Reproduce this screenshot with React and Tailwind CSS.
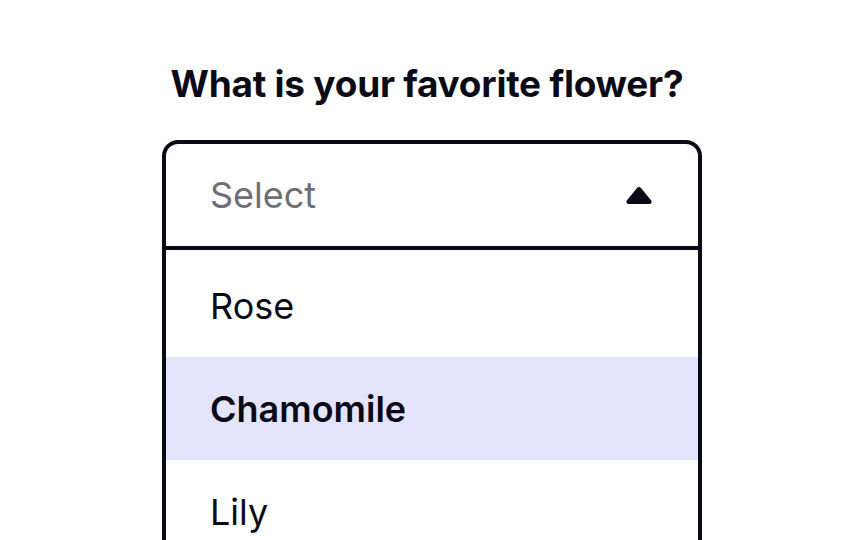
import React, { useState } from 'react';

const flowers = ['Rose', 'Chamomile', 'Lily'];

const App = () => {
  const [active] = useState('Chamomile');

  return (
    <div className="w-[864px] h-[540px] overflow-hidden bg-white font-['Inter',sans-serif] text-[#0b0b18]">
      <div className="flex flex-col items-center pt-[62px]">
        {/* Question */}
        <h1 className="mr-[10px] text-[37px] leading-[44px] font-bold tracking-[-0.25px]">What is your favorite flower?</h1>

        {/* Select box */}
        <div className="mt-[34px] w-[540px] border-4 border-[#0b0b18] rounded-2xl overflow-hidden">
          <div className="h-[106px] flex items-center justify-between pl-[44px] pr-[45px] border-b-4 border-[#0b0b18]">
            <span className="text-[36px] text-[#6e6e76]">Select</span>
            <svg width="28" height="19" viewBox="0 0 28 19">
              <path d="M11.6 2.4 Q14 -0.4 16.4 2.4 L26 14.2 Q27.6 17.6 24.4 18 L3.6 18 Q0.4 17.6 2 14.2 Z" fill="#0b0b18" />
            </svg>
          </div>
          <ul className="pt-1">
            {flowers.map((f) => (
              <li
                key={f}
                className={`h-[103px] flex items-center pl-[44px] text-[36px] ${f === active ? 'bg-[#e4e4fd] font-semibold' : ''}`}
              >
                {f}
              </li>
            ))}
          </ul>
        </div>
      </div>
    </div>
  );
};

export default App;
